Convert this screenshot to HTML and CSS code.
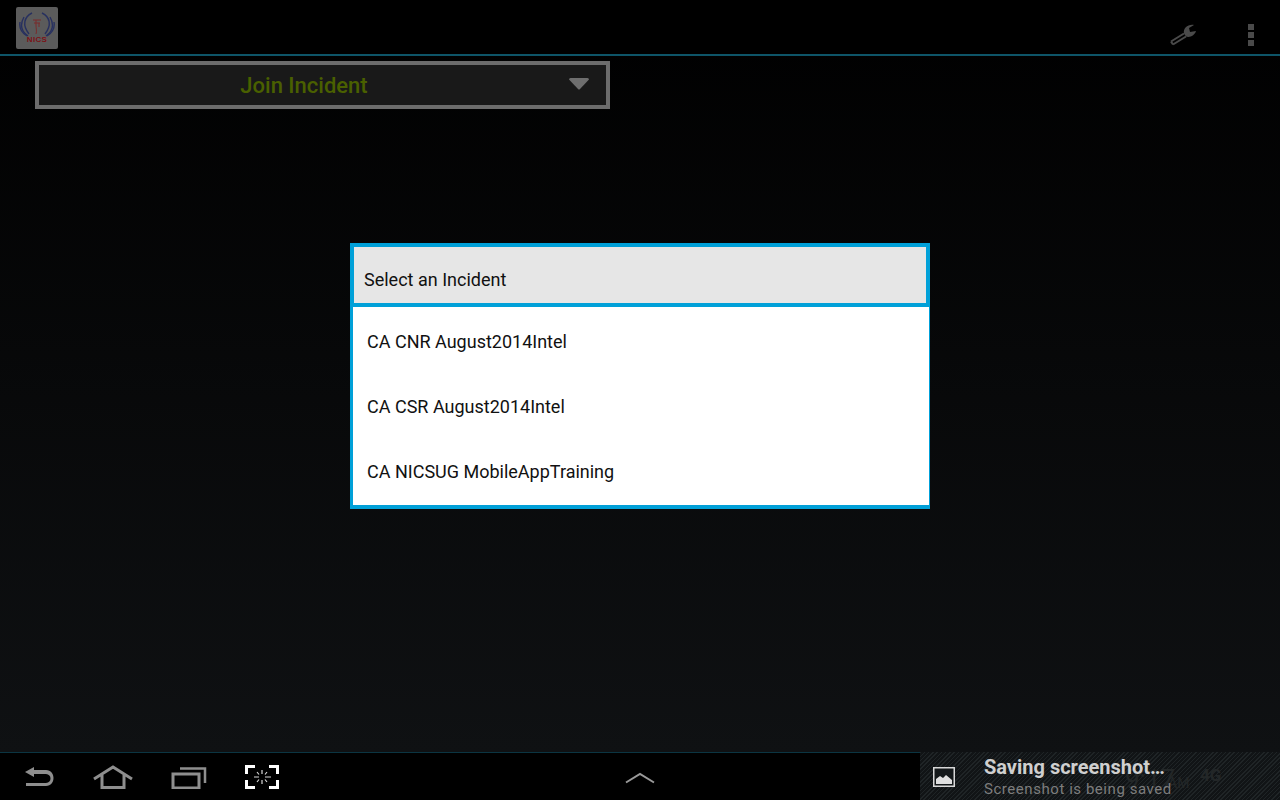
FILE: index.html
```html
<!DOCTYPE html>
<html lang="en">
<head>
<meta charset="utf-8">
<title>Join Incident</title>
<link rel="stylesheet" href="styles.css">
</head>
<body>
<div class="screen">
  <header class="action-bar">
    <div class="logo">
      <svg class="logo-art" width="38" height="30" viewBox="0 0 38 30">
        <g fill="none" stroke="#27305f" stroke-width="1.4">
          <path d="M14 2C6 6 4 14 11 23"/>
          <path d="M24 2C32 6 34 14 27 23"/>
          <path d="M6 6C2 13 3 20 10 25"/>
          <path d="M32 6C36 13 35 20 28 25"/>
          <path d="M2 11C1 17 4 22 9 25"/>
          <path d="M36 11C37 17 34 22 29 25"/>
        </g>
        <path d="M15 9H23M16 12H22M18 9V14C18 18 19 20 18 23M21 12V16" fill="none" stroke="#7a2b2b" stroke-width="1"/>
      </svg>
      <span class="logo-text">NICS</span>
    </div>
    <div class="actions">
      <svg class="wrench" width="30" height="24" viewBox="0 0 30 24">
        <path d="M3 19.5 16 11.5M5 22.5 18 14.5" fill="none" stroke="#4a4a4a" stroke-width="2"/>
        <path d="M3 19.5 5 22.5" fill="none" stroke="#4a4a4a" stroke-width="2"/>
        <path d="M16 11.5C15 6 20 2 26 3L21 6 22 10 28 9C27 13 22 16 18 14.5Z" fill="#4a4a4a"/>
      </svg>
      <div class="overflow"><i></i><i></i><i></i></div>
    </div>
  </header>

  <main class="content">
    <div class="spinner">
      <span class="spinner-label">Join Incident</span>
      <svg class="spinner-arrow" width="20" height="12" viewBox="0 0 20 12"><path d="M0 1.5Q0 0 1.5 0H18.5Q20 0 20 1.5L11 11Q10 12 9 11Z" fill="#6e6e6e"/></svg>
    </div>
  </main>

  <nav class="nav-bar">
    <div class="nav-left">
      <svg class="nav-icon" width="32" height="22" viewBox="0 0 32 22">
        <path d="M2 6 11 1V4H23C33 4 33 20 23 20H3V17H23C29 17 29 8 23 8H11V11Z" fill="#8e8e8e"/>
      </svg>
      <svg class="nav-icon" width="40" height="24" viewBox="0 0 40 24">
        <path d="M1 14 20 2 39 14M9 10V22.5H31V10" fill="none" stroke="#8e8e8e" stroke-width="3"/>
      </svg>
      <svg class="nav-icon" width="36" height="24" viewBox="0 0 36 24">
        <path d="M9 3.5H34V18" fill="none" stroke="#8e8e8e" stroke-width="2.5"/>
        <rect x="2" y="9" width="26" height="14" fill="none" stroke="#8e8e8e" stroke-width="3"/>
      </svg>
      <svg class="nav-icon" width="34" height="24" viewBox="0 0 34 24">
        <path d="M10 1.5H1.5V9M24 1.5H32.5V9M10 22.5H1.5V15M24 22.5H32.5V15" fill="none" stroke="#fff" stroke-width="3"/>
        <path d="M17 5V9M17 15V19M9 12H14M20 12H26M12 7 14 9.5M22 7 20 9.5M12 17 14 14.5M22 17 20 14.5" fill="none" stroke="#d8d8d8" stroke-width="1.2"/>
      </svg>
    </div>
    <svg class="nav-up" width="30" height="12" viewBox="0 0 30 12"><path d="M1 10.5 15 2 29 10.5" fill="none" stroke="#9a9a9a" stroke-width="2"/></svg>
    <div class="ticker">
      <div class="ghost">
        <span class="ghost-time">9:17</span><span class="ghost-am">AM</span><span class="ghost-net">4G</span>
      </div>
      <svg class="ticker-icon" width="22" height="20" viewBox="0 0 22 20">
        <rect x="0.75" y="0.75" width="20.5" height="18.5" fill="#14181a" stroke="#d8d8d8" stroke-width="1.5"/>
        <path d="M3 17V12L7 9 10 11 13 8 19 13V17Z" fill="#e0e0e0"/>
      </svg>
      <div class="ticker-text">
        <div class="ticker-title">Saving screenshot…</div>
        <div class="ticker-sub">Screenshot is being saved</div>
      </div>
    </div>
  </nav>

  <section class="dialog">
    <h2 class="dialog-title">Select an Incident</h2>
    <ul class="dialog-list">
      <li class="dialog-item">CA CNR August2014Intel</li>
      <li class="dialog-item">CA CSR August2014Intel</li>
      <li class="dialog-item">CA NICSUG MobileAppTraining</li>
    </ul>
  </section>
</div>
</body>
</html>
```
FILE: styles.css
```css
* { box-sizing: border-box; }
html, body { margin: 0; padding: 0; height: 100%; }
body { background: #000; font-family: Roboto, "Liberation Sans", sans-serif; overflow: hidden; }

.screen {
  position: relative;
  width: 1280px;
  height: 800px;
  display: flex;
  flex-direction: column;
  background: linear-gradient(#000 0, #0f1113 752px);
}

/* action bar */
.action-bar {
  height: 56px;
  flex: none;
  display: flex;
  align-items: flex-start;
  justify-content: space-between;
  padding: 7px 0 0 16px;
  background: #000;
  border-bottom: 2px solid #0e5568;
}
.logo {
  width: 42px;
  height: 42px;
  background: #5b5b5b;
  border-radius: 2px;
  display: flex;
  flex-direction: column;
  align-items: center;
  padding-top: 4px;
}
.logo-art { display: block; flex: none; margin-bottom: -6px; }
.logo-text { font: bold 8px/9px "Liberation Sans", sans-serif; color: #7c1216; letter-spacing: .3px; }
.actions { display: flex; align-items: flex-start; padding-top: 9px; }
.wrench { display: block; margin-right: 50px; margin-top: 6px; margin-left: 0; }
.overflow { display: flex; flex-direction: column; gap: 2px; margin-right: 26px; margin-top: 8px; }
.overflow i { display: block; width: 6px; height: 6px; background: #4a4a4a; }

/* content */
.content { flex: 1; padding: 5px 0 0 35px; }
.spinner {
  width: 575px;
  height: 48px;
  border: 4px solid #6c6c6c;
  background: #191919;
  display: flex;
  align-items: center;
  padding: 0 17px 0 0;
}
.spinner-label {
  flex: 1;
  text-align: center;
  font-size: 22px;
  font-weight: 500;
  color: #4a6000;
  padding-right: 0;
}
.spinner-arrow { display: block; flex: none; margin-top: -2px; }

/* nav bar */
.nav-bar {
  height: 48px;
  flex: none;
  background: #000;
  display: grid;
  grid-template-columns: 1fr auto 1fr;
  align-items: center;
  border-top: 1px solid #0b3542;
}
.nav-left { display: flex; align-items: center; padding-left: 23px; }
.nav-icon { display: block; flex: none; margin-right: 38px; }
.nav-up { display: block; margin-top: 2px; }
.ticker {
  position: relative;
  justify-self: end;
  width: 360px;
  height: 49px;
  margin-top: -1px;
  display: flex;
  align-items: center;
  padding-left: 13px;
  overflow: hidden;
  background-color: #14181a;
  background-image: repeating-linear-gradient(135deg, #1f2426 0 1px, #111416 1px 3px);
}
.ticker-icon { display: block; flex: none; margin-right: 29px; }
.ticker-text { position: relative; }
.ticker-title { font-size: 20px; line-height: 26px; font-weight: 700; color: #cfcfcf; margin-top: -1px; }
.ticker-sub { font-size: 15px; line-height: 18px; color: #7d7d7d; letter-spacing: .55px; }
.ghost { position: absolute; inset: 0; color: #232728; }
.ghost-time { position: absolute; left: 205px; top: 12px; font-size: 26px; line-height: 30px; }
.ghost-am { position: absolute; left: 248px; top: 23px; font-size: 14px; line-height: 16px; }
.ghost-net { position: absolute; left: 280px; top: 13px; font-size: 17px; line-height: 20px; font-weight: 700; }

/* dialog */
.dialog {
  position: absolute;
  left: 350px;
  top: 243px;
  width: 580px;
  height: 266px;
  display: flex;
  flex-direction: column;
  background: #00a0d8;
}
.dialog-title {
  margin: 0;
  height: 64px;
  flex: none;
  border: 4px solid #00a0d8;
  background: #e6e6e6;
  font-size: 18px;
  line-height: 22px;
  font-weight: 400;
  color: #111;
  padding: 22px 0 0 10px;
}
.dialog-list {
  list-style: none;
  margin: 0;
  padding: 0 0 0 0;
  flex: 1;
  border-left: 3px solid #00a0d8;
  border-right: 1px solid #00a0d8;
  border-bottom: 4px solid #00a0d8;
  background: #fff;
}
.dialog-item {
  height: 65px;
  padding-left: 14px;
  font-size: 18px;
  line-height: 70px;
  color: #111;
}
```
